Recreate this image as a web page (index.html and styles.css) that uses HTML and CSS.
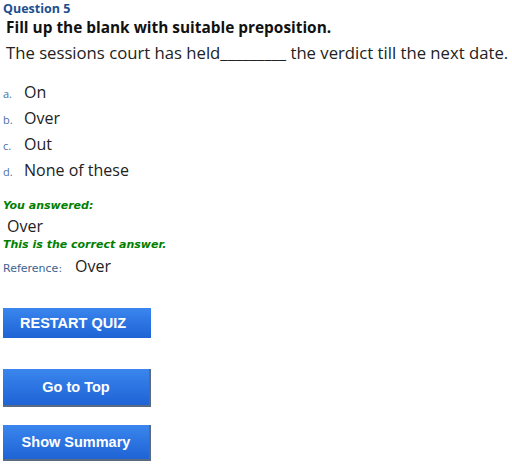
FILE: index.html
```html
<!DOCTYPE html>
<html>
<head>
<meta charset="utf-8">
<link rel="stylesheet" href="styles.css">
</head>
<body>
<div class="page">
  <div class="qnum">Question 5</div>
  <div class="qtitle">Fill up the blank with suitable preposition.</div>
  <div class="qtext">The sessions court has held_________ the verdict till the next date.</div>
  <ol class="options">
    <li class="opt"><span class="letter">a.</span><span class="otext">On</span></li>
    <li class="opt"><span class="letter">b.</span><span class="otext">Over</span></li>
    <li class="opt"><span class="letter">c.</span><span class="otext">Out</span></li>
    <li class="opt"><span class="letter">d.</span><span class="otext">None of these</span></li>
  </ol>
  <div class="green answered">You answered:</div>
  <div class="answer">Over</div>
  <div class="green">This is the correct answer.</div>
  <div class="ref"><span class="reflabel">Reference:</span><span class="refval">Over</span></div>
  <div class="buttons">
    <div class="btn restart">RESTART QUIZ</div>
    <div class="btn center top">Go to Top</div>
    <div class="btn center summary">Show Summary</div>
  </div>
</div>
</body>
</html>
```
FILE: styles.css
```css
html, body { margin: 0; padding: 0; background: #fff; }
.page { padding: 0 0 0 3px; font-family: "Open Sans", sans-serif; color: #222; }
.qnum { font-family: "Open Sans", sans-serif; font-weight: bold; font-size: 12.5px; color: #1b4f8f; line-height: 17px; }
.qtitle { font-weight: bold; font-size: 15.4px; line-height: 21px; margin: 0 0 0 3px; color: #111; }
.qtext { font-size: 16.7px; line-height: 23px; margin: 3px 0 0 3px; color: #222; white-space: nowrap; }
.options { list-style: none; margin: 17px 0 0 0; padding: 0; }
.opt { display: flex; align-items: baseline; height: 26px; }
.opt:last-child { height: 28px; }
.letter { width: 21px; font-size: 11px; color: #4a6fa5; }
.otext { font-size: 16px; color: #222; }
.green { font-family: "DejaVu Sans", sans-serif; font-weight: bold; font-style: italic; font-size: 11px; color: #008000; line-height: 13px; }
.answered { margin-top: 12px; }
.answer { font-size: 16px; margin: 3px 0 0 4px; line-height: 22px; }
.answer + .green { margin-top: 1px; }
.ref { display: flex; align-items: baseline; margin-top: 4px; }
.reflabel { font-family: "DejaVu Sans", sans-serif; font-size: 11px; color: #3d5f8f; width: 72px; }
.refval { font-size: 16px; color: #222; }
.buttons { display: flex; flex-direction: column; align-items: flex-start; margin-top: 31px; }
.btn { width: 146px; height: 29px; background: linear-gradient(#3a86ee, #1f63d5); color: #fff; font-family: "Liberation Sans", Arial, sans-serif; font-weight: bold; font-size: 14.5px; display: flex; align-items: center; border-right: 2px solid #5a6a80; border-bottom: 2px solid #5a6a80; box-sizing: content-box; }
.restart { text-indent: 17px; border: none; width: 148px; height: 30px; }
.center { justify-content: center; }
.top { height: 36px; margin-top: 31px; }
.summary { height: 34px; margin-top: 18px; }
```
